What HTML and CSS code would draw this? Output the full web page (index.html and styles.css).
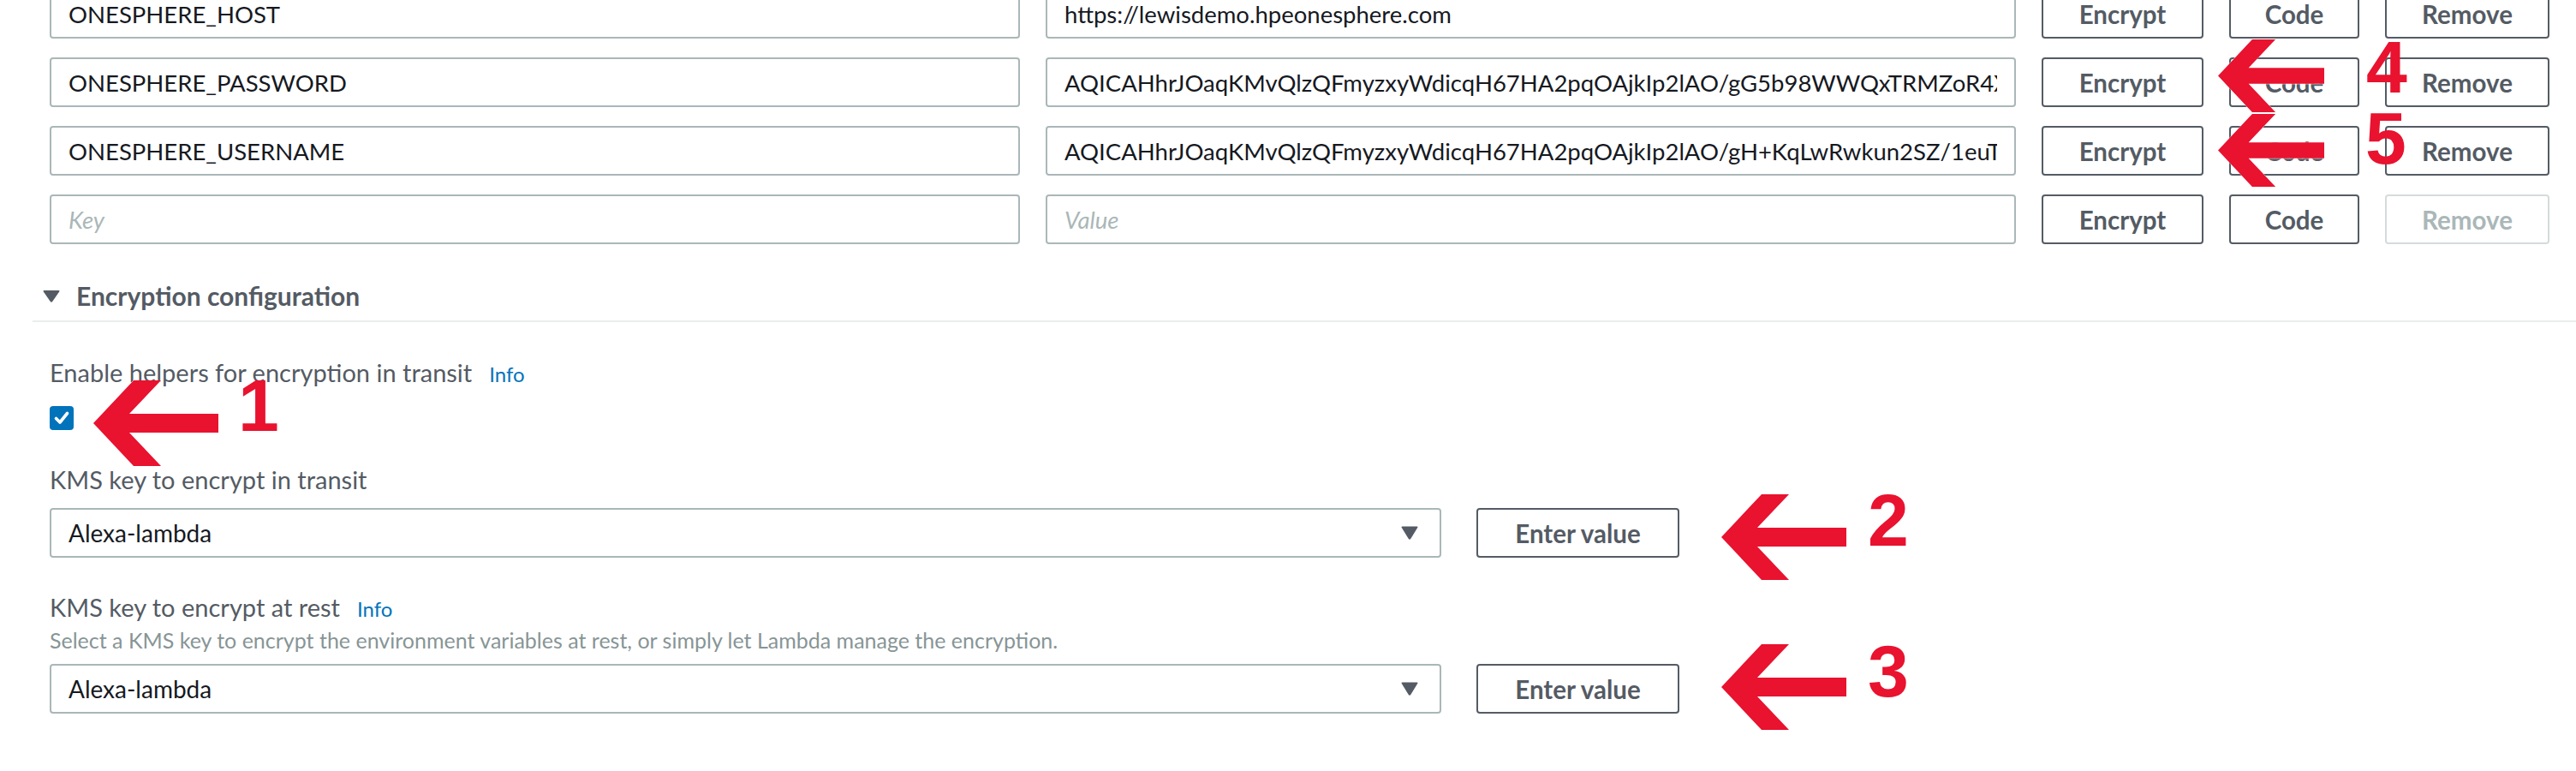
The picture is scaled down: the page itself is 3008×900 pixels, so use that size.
FILE: index.html
```html
<!DOCTYPE html>
<html lang="en">
<head>
<meta charset="utf-8">
<title>Environment variables – Encryption configuration</title>
<link rel="stylesheet" href="styles.css">
</head>
<body>
<main class="page">
  <section class="env-list">
    <div class="env-row">
      <input class="field" value="ONESPHERE_HOST" readonly>
      <input class="field" value="https://lewisdemo.hpeonesphere.com" readonly>
      <button class="btn">Encrypt</button>
      <button class="btn">Code</button>
      <button class="btn">Remove</button>
    </div>
    <div class="env-row">
      <input class="field" value="ONESPHERE_PASSWORD" readonly>
      <input class="field" value="AQICAHhrJOaqKMvQlzQFmyzxyWdicqH67HA2pqOAjkIp2lAO/gG5b98WWQxTRMZoR4Xk1eQpLw7v==" readonly>
      <button class="btn">Encrypt</button>
      <button class="btn">Code</button>
      <button class="btn">Remove</button>
    </div>
    <div class="env-row">
      <input class="field" value="ONESPHERE_USERNAME" readonly>
      <input class="field" value="AQICAHhrJOaqKMvQlzQFmyzxyWdicqH67HA2pqOAjkIp2lAO/gH+KqLwRwkun2SZ/1euT8wbn3Q==" readonly>
      <button class="btn">Encrypt</button>
      <button class="btn">Code</button>
      <button class="btn">Remove</button>
    </div>
    <div class="env-row">
      <input class="field" placeholder="Key">
      <input class="field" placeholder="Value">
      <button class="btn">Encrypt</button>
      <button class="btn">Code</button>
      <button class="btn" disabled>Remove</button>
    </div>
  </section>

  <h2 class="section-header">
    <svg class="caret" viewBox="0 0 20 15" width="20" height="15"><path d="M1.5 1 H18.5 Q20 1 19.2 2.4 L11.2 14 Q10 15.4 8.8 14 L0.8 2.4 Q0 1 1.5 1 Z" fill="#545b64"/></svg>
    <span>Encryption configuration</span>
  </h2>

  <section class="form">
    <div class="label label-first">Enable helpers for encryption in transit<a class="info" href="#">Info</a></div>
    <span class="checkbox"><svg viewBox="0 0 28 28" width="28" height="28"><path d="M7.5 14.5 L12 19 L20.5 8.5" fill="none" stroke="#fff" stroke-width="3.6" stroke-linecap="round" stroke-linejoin="round"/></svg></span>

    <div class="label label-gap">KMS key to encrypt in transit</div>
    <div class="select-row select-row-near">
      <div class="select"><span>Alexa-lambda</span><svg viewBox="0 0 20 16" width="20" height="16"><path d="M1.5 0.5 H18.5 Q20 0.5 19.2 2 L11.2 15 Q10 16.5 8.8 15 L0.8 2 Q0 0.5 1.5 0.5 Z" fill="#545b64"/></svg></div>
      <button class="btn btn-wide">Enter value</button>
    </div>

    <div class="label label-gap">KMS key to encrypt at rest<a class="info" href="#">Info</a></div>
    <div class="description">Select a KMS key to encrypt the environment variables at rest, or simply let Lambda manage the encryption.</div>
    <div class="select-row select-row-desc">
      <div class="select"><span>Alexa-lambda</span><svg viewBox="0 0 20 16" width="20" height="16"><path d="M1.5 0.5 H18.5 Q20 0.5 19.2 2 L11.2 15 Q10 16.5 8.8 15 L0.8 2 Q0 0.5 1.5 0.5 Z" fill="#545b64"/></svg></div>
      <button class="btn btn-wide">Enter value</button>
    </div>
  </section>
</main>

<div class="annotations" aria-hidden="true">
  <svg class="arrow arrow-lg a1" viewBox="0 0 146 100"><polygon points="0,50 47,0 79,0 42,39 146,39 146,61 42,61 79,100 47,100"/></svg>
  <svg class="arrow arrow-lg a2" viewBox="0 0 146 100"><polygon points="0,50 47,0 79,0 42,39 146,39 146,61 42,61 79,100 47,100"/></svg>
  <svg class="arrow arrow-lg a3" viewBox="0 0 146 100"><polygon points="0,50 47,0 79,0 42,39 146,39 146,61 42,61 79,100 47,100"/></svg>
  <svg class="arrow arrow-sm a4" viewBox="0 0 146 100"><polygon points="0,50 47,0 79,0 42,39 146,39 146,61 42,61 79,100 47,100"/></svg>
  <svg class="arrow arrow-sm a5" viewBox="0 0 146 100"><polygon points="0,50 47,0 79,0 42,39 146,39 146,61 42,61 79,100 47,100"/></svg>
  <span class="num n1">1</span>
  <span class="num n2">2</span>
  <span class="num n3">3</span>
  <span class="num n4">4</span>
  <span class="num n5">5</span>
</div>
</body>
</html>
```
FILE: styles.css
```css
* {
  box-sizing: border-box;
}

html,
body {
  margin: 0;
  padding: 0;
  background: #ffffff;
}

body {
  position: relative;
  width: 3008px;
  height: 900px;
  overflow: hidden;
  font-family: Lato, "Noto Sans", sans-serif;
  color: #16191f;
}

/* ---------- environment variable rows ---------- */
.env-list {
  display: flex;
  flex-direction: column;
  gap: 22px;
  margin-top: -13px;
  padding: 0 31px 0 58px;
}

.env-row {
  display: grid;
  grid-template-columns: 1fr 1fr 189px 152px 192px;
  column-gap: 30px;
  height: 58px;
}

.field {
  width: 100%;
  min-width: 0;
  height: 58px;
  margin: 0;
  padding: 0 20px;
  border: 2px solid #aab7b8;
  border-radius: 4px;
  background: #ffffff;
  font-family: Lato, "Noto Sans", sans-serif;
  font-size: 27.5px;
  color: #16191f;
  outline: none;
}

.field::placeholder {
  color: #aab7b8;
  font-style: italic;
  opacity: 1;
}

.btn {
  height: 58px;
  margin: 0;
  padding: 0;
  border: 2px solid #545b64;
  border-radius: 4px;
  background: #ffffff;
  font-family: Lato, "Noto Sans", sans-serif;
  font-size: 29.5px;
  font-weight: 700;
  color: #545b64;
}

.btn:disabled {
  border-color: #d5dbdb;
  color: #aab7b8;
}

.btn-wide {
  width: 237px;
  flex: none;
}

/* ---------- section header ---------- */
.section-header {
  display: flex;
  align-items: center;
  gap: 19px;
  height: 51px;
  margin: 40px 0 0 38px;
  padding: 0 0 9px 12px;
  border-bottom: 2px solid #eaeded;
  font-size: 30px;
  font-weight: 700;
  line-height: 40px;
  color: #545b64;
}

.caret {
  flex: none;
}

/* ---------- form ---------- */
.form {
  padding-left: 58px;
}

.label {
  font-size: 29px;
  line-height: 40px;
  color: #545b64;
}

.label-first {
  margin-top: 39px;
}

.label-gap {
  margin-top: 38px;
}

.info {
  margin-left: 20px;
  font-size: 24px;
  color: #0073bb;
  text-decoration: none;
}

.checkbox {
  display: flex;
  width: 28px;
  height: 28px;
  margin-top: 17px;
  border-radius: 4px;
  background: #0073bb;
}

.description {
  font-size: 25px;
  line-height: 32px;
  color: #879596;
}

.select-row {
  display: flex;
  gap: 41px;
}

.select-row-near {
  margin-top: 13px;
}

.select-row-desc {
  margin-top: 12px;
}

.select {
  display: flex;
  align-items: center;
  justify-content: space-between;
  width: 1625px;
  height: 58px;
  padding: 0 25px 0 20px;
  border: 2px solid #aab7b8;
  border-radius: 4px;
  font-size: 28px;
  color: #16191f;
}

/* ---------- red annotations (overlay) ---------- */
.annotations {
  position: absolute;
  inset: 0;
  pointer-events: none;
}

.arrow {
  position: absolute;
  fill: #e9122f;
  stroke: #ffffff;
  stroke-width: 1;
  paint-order: stroke;
}

.arrow-lg {
  width: 146px;
  height: 100px;
}

.arrow-sm {
  width: 124px;
  height: 85px;
}

.a1 { left: 109px; top: 444px; }
.a2 { left: 2010px; top: 577px; }
.a3 { left: 2010px; top: 752px; }
.a4 { left: 2590px; top: 46px; }
.a5 { left: 2590px; top: 133px; }

.num {
  position: absolute;
  font-family: "Liberation Sans", Arial, sans-serif;
  font-size: 86px;
  font-weight: 700;
  line-height: 86px;
  color: #e9122f;
}

.n1 { left: 278px; top: 430px; }
.n2 { left: 2181px; top: 564px; }
.n3 { left: 2181px; top: 740px; }
.n4 { left: 2763px; top: 35px; }
.n5 { left: 2762px; top: 118px; }
```
